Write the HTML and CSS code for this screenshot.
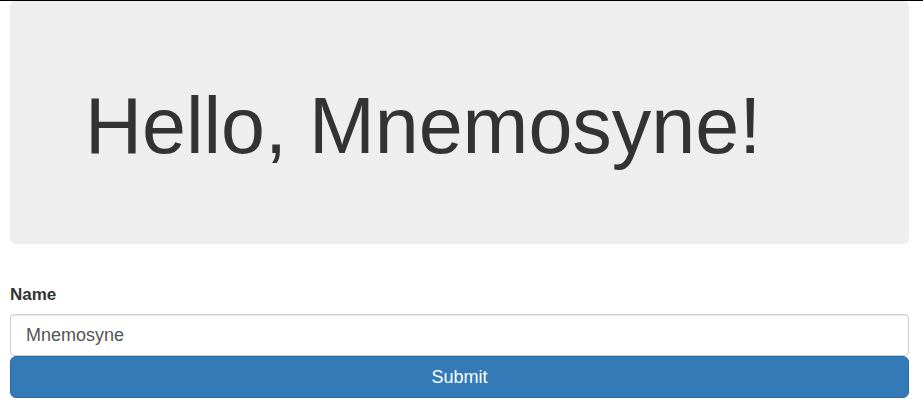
FILE: index.html
```html
<!DOCTYPE html>
<html>
<head>
<meta charset="utf-8">
<link rel="stylesheet" href="styles.css">
</head>
<body>
<div class="page">
  <div class="jumbotron">
    <h1 class="greeting">Hello, Mnemosyne!</h1>
  </div>
  <form class="form">
    <label class="label" for="name">Name</label>
    <input class="input" id="name" type="text" value="Mnemosyne">
    <button class="btn" type="button">Submit</button>
  </form>
</div>
</body>
</html>
```
FILE: styles.css
```css
html, body {
  margin: 0;
  padding: 0;
  background: #fff;
}
body {
  border-top: 1px solid #000;
  font-family: "Liberation Sans", Arial, sans-serif;
  color: #333;
}
.page {
  width: 899px;
  padding-left: 10px;
}
.jumbotron {
  background: #eee;
  border-radius: 6px;
  height: 243px;
  display: flex;
  align-items: center;
  padding: 6px 0 0 75px;
  box-sizing: border-box;
}
.greeting {
  margin: 0;
  font-size: 79px;
  font-weight: 400;
  line-height: 1;
  color: #333;
}
.form {
  display: flex;
  flex-direction: column;
  padding-top: 41px;
}
.label {
  font-weight: 700;
  font-size: 17px;
  line-height: 20px;
  margin-bottom: 9px;
  color: #333;
}
.input {
  box-sizing: border-box;
  height: 42px;
  border: 1px solid #ccc;
  border-radius: 4px;
  padding: 0 15px;
  font-family: "Liberation Sans", Arial, sans-serif;
  font-size: 18px;
  color: #555;
  box-shadow: inset 0 1px 1px rgba(0,0,0,.075);
  outline: none;
}
.btn {
  box-sizing: border-box;
  height: 42px;
  margin-top: 0;
  background: #337ab7;
  border: 1px solid #2e6da4;
  border-radius: 6px;
  color: #fff;
  font-family: "Liberation Sans", Arial, sans-serif;
  font-size: 18px;
}
```
